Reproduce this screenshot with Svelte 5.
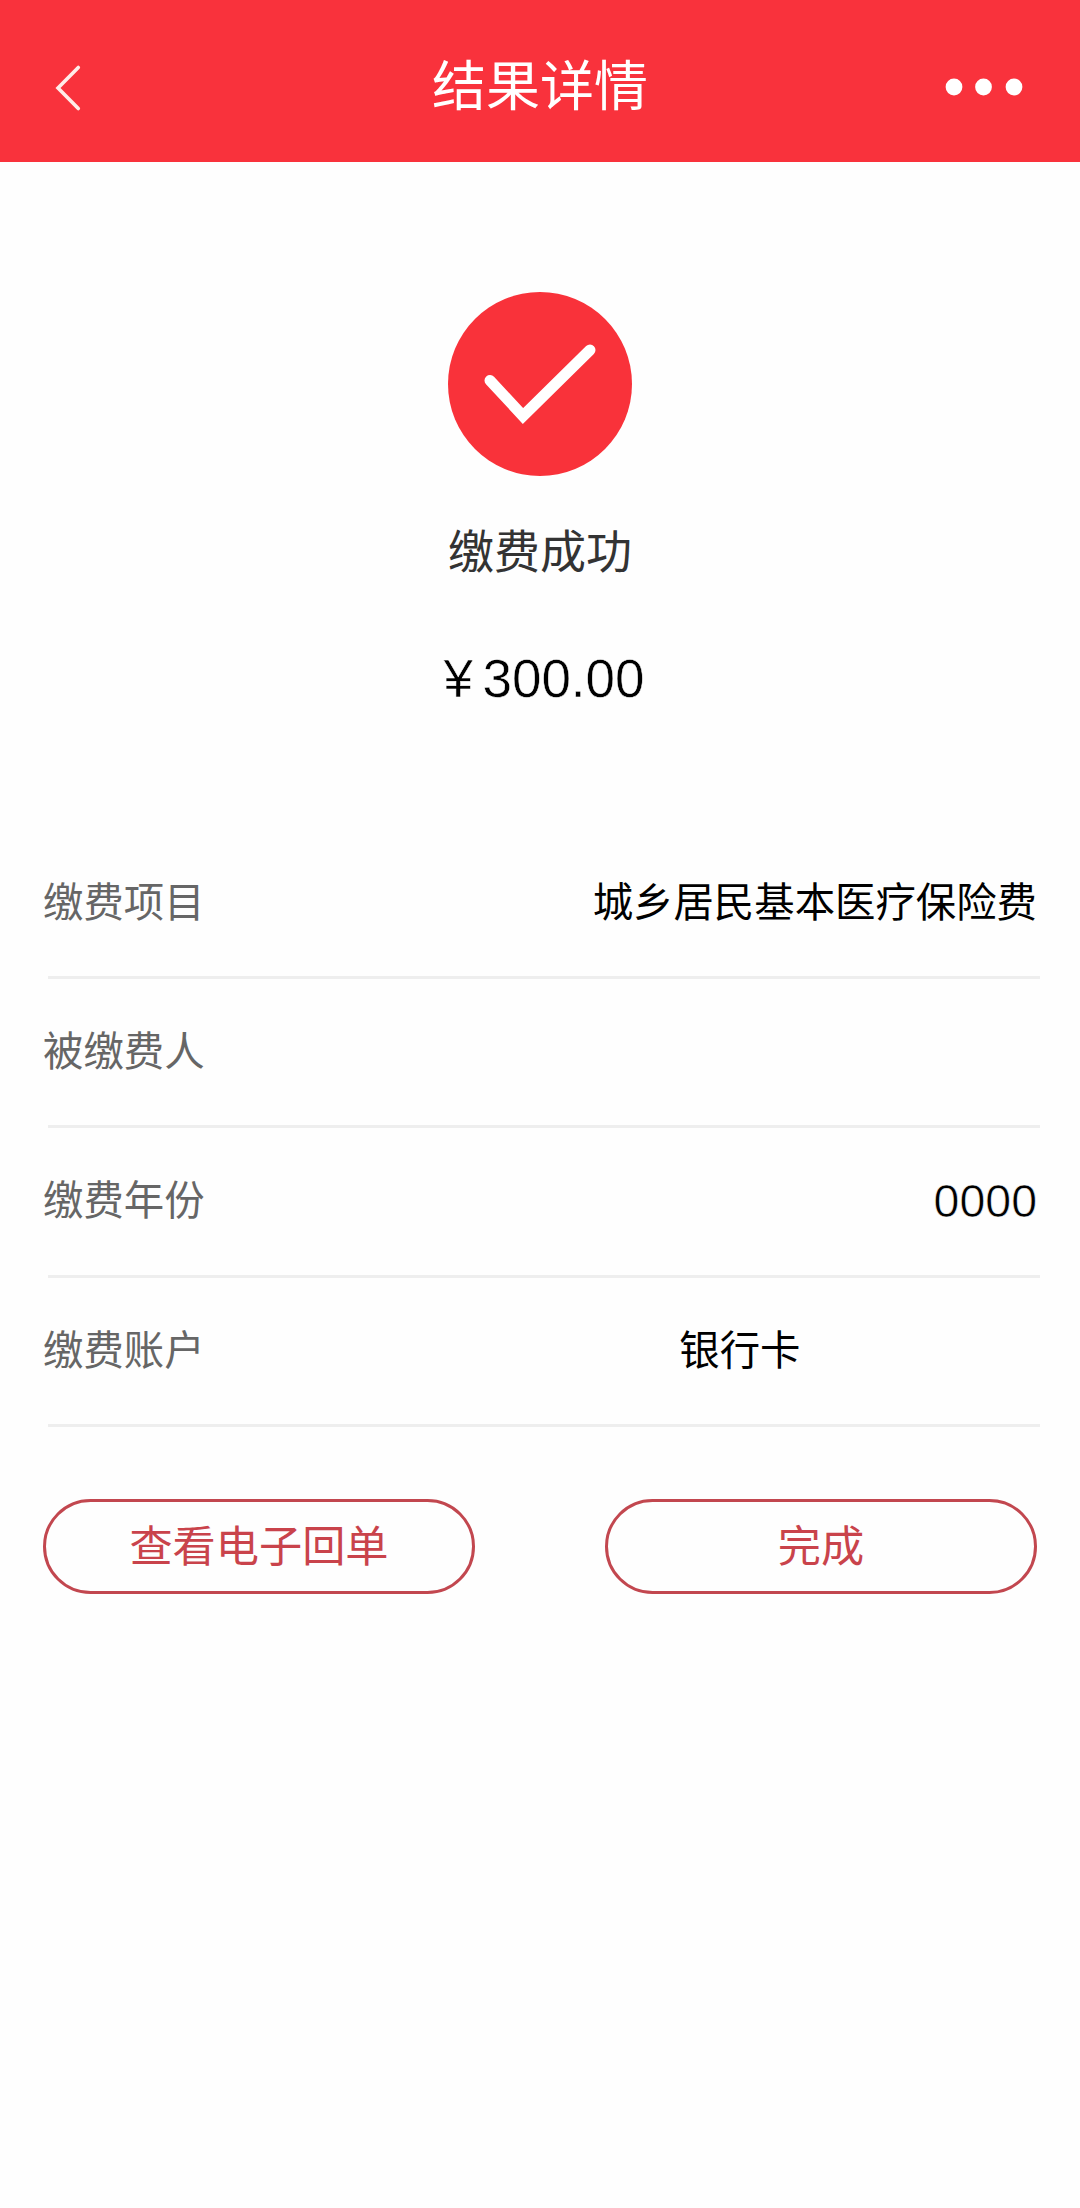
<script>
  const rows = [
    { label: '缴费项目', value: '城乡居民基本医疗保险费', kind: 'text' },
    { label: '被缴费人', value: '', kind: 'text' },
    { label: '缴费年份', value: '0000', kind: 'number' },
    { label: '缴费账户', value: '银行卡', kind: 'account' },
  ];
</script>

<div class="page">
  <header>
    <button class="back" aria-label="返回">
      <svg width="30" height="50" viewBox="0 0 30 50"><path d="M25.3 5.5 L5 26 L25.3 46.5" /></svg>
    </button>
    <h1>结果详情</h1>
    <button class="more" aria-label="更多">
      <svg width="80" height="20" viewBox="0 0 80 20">
        <circle cx="10" cy="10" r="8.4" /><circle cx="39.5" cy="10" r="8.4" /><circle cx="70" cy="10" r="8.4" />
      </svg>
    </button>
  </header>

  <section class="result">
    <svg width="184" height="184" viewBox="0 0 184 184">
      <circle cx="92" cy="92" r="92" />
      <path d="M42 88.5 L75 124 L142 58" />
    </svg>
    <p class="status">缴费成功</p>
    <p class="amount"><span class="yen">¥</span>300.00</p>
  </section>

  <ul>
    {#each rows as row}
      <li>
        <span class="label">{row.label}</span>
        <span class="value {row.kind}">{row.value}</span>
      </li>
    {/each}
  </ul>

  <div class="actions">
    <button>查看电子回单</button>
    <button>完成</button>
  </div>
</div>

<style>
  :global(body) {
    margin: 0;
    background: #fefefe;
  }
  .page {
    height: 2208px;
    overflow: hidden;
    box-sizing: border-box;
    font-family: 'Liberation Sans', 'Noto Sans CJK SC', sans-serif;
    background: #fefefe;
    color: #000;
  }
  header {
    height: 162px;
    display: grid;
    grid-template-columns: 140px 1fr 140px;
    align-items: center;
    padding: 0 0 0 53px;
    box-sizing: border-box;
    background: #f9323c;
  }
  header button {
    display: flex;
    padding: 0;
    border: 0;
    background: none;
  }
  header svg {
    display: block;
    margin-top: 12px;
  }
  .more {
    padding-left: 4px;
  }
  .back path {
    fill: none;
    stroke: #ffece8;
    stroke-width: 3.6;
    stroke-linecap: round;
  }
  .more circle {
    fill: #fff;
  }
  h1 {
    margin: 12px 0 0;
    padding-right: 53px;
    font-size: 54px;
    line-height: 64px;
    font-weight: 400;
    text-align: center;
    color: #fff;
  }
  .result {
    display: flex;
    flex-direction: column;
    align-items: center;
    height: 667.5px;
    padding-top: 130px;
    box-sizing: border-box;
  }
  .result svg {
    display: block;
  }
  .result circle {
    fill: #f9323a;
  }
  .result path {
    fill: none;
    stroke: #fff;
    stroke-width: 11;
    stroke-linecap: round;
    stroke-linejoin: miter;
  }
  p {
    margin: 0;
  }
  .status {
    margin-top: 46px;
    font-size: 46px;
    line-height: 60px;
    color: #333;
  }
  .amount {
    display: flex;
    margin-top: 67px;
    padding-left: 8px;
    font-size: 53px;
    line-height: 60px;
    -webkit-text-stroke: 0.5px #fefefe;
  }
  .yen {
    width: 39px;
  }
  ul {
    margin: 0;
    padding: 0 40px 0 43px;
    list-style: none;
  }
  li {
    display: flex;
    justify-content: space-between;
    height: 149.4px;
    padding: 43px 0 0;
    box-sizing: border-box;
    font-size: 40.4px;
    line-height: 60px;
    background: linear-gradient(#eee, #eee) 5px 100% / 992px 3px no-repeat;
  }
  .label {
    color: #666;
  }
  .value {
    padding-right: 3px;
  }
  .number {
    font-size: 46.5px;
    -webkit-text-stroke: 0.6px #fefefe;
  }
  .account {
    padding-right: 239.5px;
  }
  .actions {
    display: flex;
    justify-content: space-between;
    padding: 72px 43px 0;
  }
  .actions button {
    width: 432px;
    height: 95px;
    padding: 0 0 8px;
    box-sizing: border-box;
    border: 3px solid #c2474f;
    border-radius: 48px;
    background: transparent;
    color: #c9434b;
    font: inherit;
    font-size: 43.2px;
  }
</style>
